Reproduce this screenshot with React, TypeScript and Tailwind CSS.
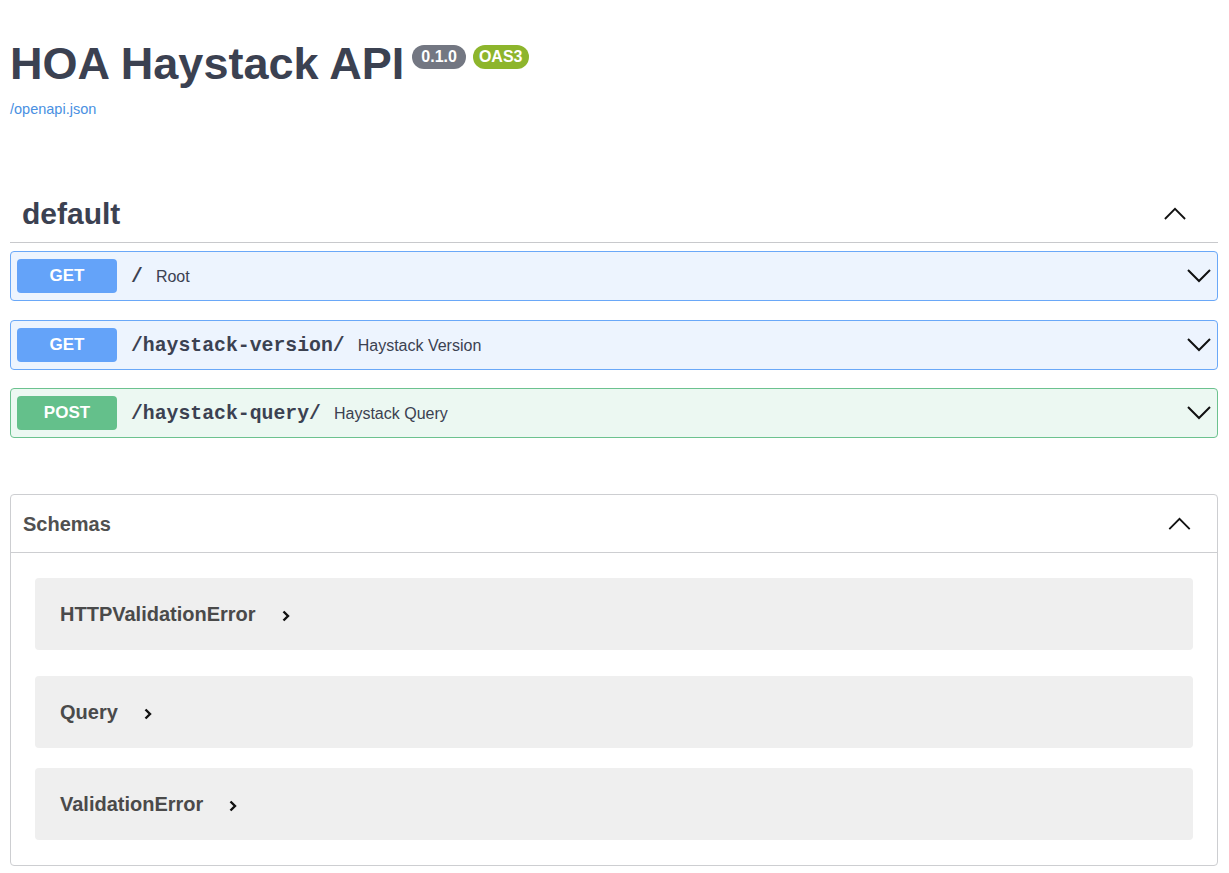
import React from "react";

const sans = { fontFamily: '"Liberation Sans", Arial, sans-serif' };

const ChevronUp = ({ className = "" }: { className?: string }) => (
  <svg viewBox="0 0 24 14" className={className} fill="none" stroke="#111" strokeWidth={2}>
    <polyline points="1,13 12,2 23,13" />
  </svg>
);

const ChevronDown = ({ className = "" }: { className?: string }) => (
  <svg viewBox="0 0 24 14" className={className} fill="none" stroke="#111" strokeWidth={2}>
    <polyline points="1,1 12,12 23,1" />
  </svg>
);

const ChevronRight = () => (
  <svg viewBox="0 0 8 12" className="w-[8px] h-[12px]" fill="none" stroke="#111" strokeWidth={2.4}>
    <polyline points="1.5,1.5 6,6 1.5,10.5" />
  </svg>
);

interface OpProps {
  method: "GET" | "POST";
  path: string;
  summary: string;
}

const Operation = ({ method, path, summary }: OpProps) => {
  const get = method === "GET";
  return (
    <div
      className={`h-[50px] flex items-center pl-[6px] pr-[6px] rounded-[4px] border ${
        get ? "bg-[#edf4fe] border-[#6aa8f8]" : "bg-[#ecf8f2] border-[#6cc28f]"
      }`}
    >
      <div
        className={`w-[100px] h-[34px] rounded-[4px] flex items-center justify-center text-white text-[17px] font-bold ${
          get ? "bg-[#64a3f9]" : "bg-[#64c08b]"
        }`}
      >
        {method}
      </div>
      <span
        className="ml-[14px] mt-[4px] text-[19.8px] font-bold text-[#3b4151]"
        style={{ fontFamily: '"Liberation Mono", "Courier New", monospace' }}
      >
        {path}
      </span>
      <span className="ml-[13px] mt-[2px] text-[16px] text-[#3b4151]">{summary}</span>
      <div className="flex-1" />
      <ChevronDown className="w-[24px] h-[14px]" />
    </div>
  );
};

const SchemaItem = ({ name, className = "" }: { name: string; className?: string }) => (
  <div className={`h-[72px] rounded-[4px] bg-[#efefef] flex items-center pl-[25px] ${className}`}>
    <span className="text-[20px] font-bold text-[#4a4a4a]">{name}</span>
    <span className="ml-[26px] mt-[3px] flex">
      <ChevronRight />
    </span>
  </div>
);

export default function App() {
  return (
    <div className="min-h-screen bg-white pl-[10px] pr-[11px] pb-[10px]" style={sans}>
      {/* Info */}
      <div className="pt-[39px]">
        <div className="flex items-start">
          <h2 className="text-[45px] leading-[50px] font-bold text-[#3b4151]">HOA Haystack API</h2>
          <span className="ml-[8px] mt-[6px] h-[24px] px-[9px] rounded-full bg-[#737782] text-white text-[16px] font-bold flex items-center">
            0.1.0
          </span>
          <span className="ml-[7px] mt-[6px] h-[24px] px-[6px] rounded-full bg-[#8db52c] text-white text-[16px] font-bold flex items-center">
            OAS3
          </span>
        </div>
        <a className="block mt-[11px] text-[14.5px] leading-[18px] text-[#4990e2]">/openapi.json</a>
      </div>

      {/* default tag */}
      <div className="mt-[66px]">
        <div className="h-[59px] flex items-center pl-[12px] pr-[32px] border-b border-[#c8c9cc]">
          <h3 className="mt-[1px] text-[30px] font-bold text-[#3b4151]">default</h3>
          <div className="flex-1" />
          <ChevronUp className="w-[22px] h-[13px]" />
        </div>
        <div className="mt-[8px] flex flex-col gap-[18.5px]">
          <Operation method="GET" path="/" summary="Root" />
          <Operation method="GET" path="/haystack-version/" summary="Haystack Version" />
          <Operation method="POST" path="/haystack-query/" summary="Haystack Query" />
        </div>
      </div>

      {/* Schemas */}
      <div className="mt-[56px] border border-[#cdced1] rounded-[4px]">
        <div className="h-[58px] flex items-center pl-[12px] pr-[26px] border-b border-[#cdced1]">
          <h4 className="text-[20px] font-bold text-[#505050]">Schemas</h4>
          <div className="flex-1" />
          <ChevronUp className="w-[23px] h-[13px]" />
        </div>
        <div className="px-[24px] pt-[25px] pb-[25px]">
          <SchemaItem name="HTTPValidationError" />
          <SchemaItem name="Query" className="mt-[26px]" />
          <SchemaItem name="ValidationError" className="mt-[20px]" />
        </div>
      </div>
    </div>
  );
}
